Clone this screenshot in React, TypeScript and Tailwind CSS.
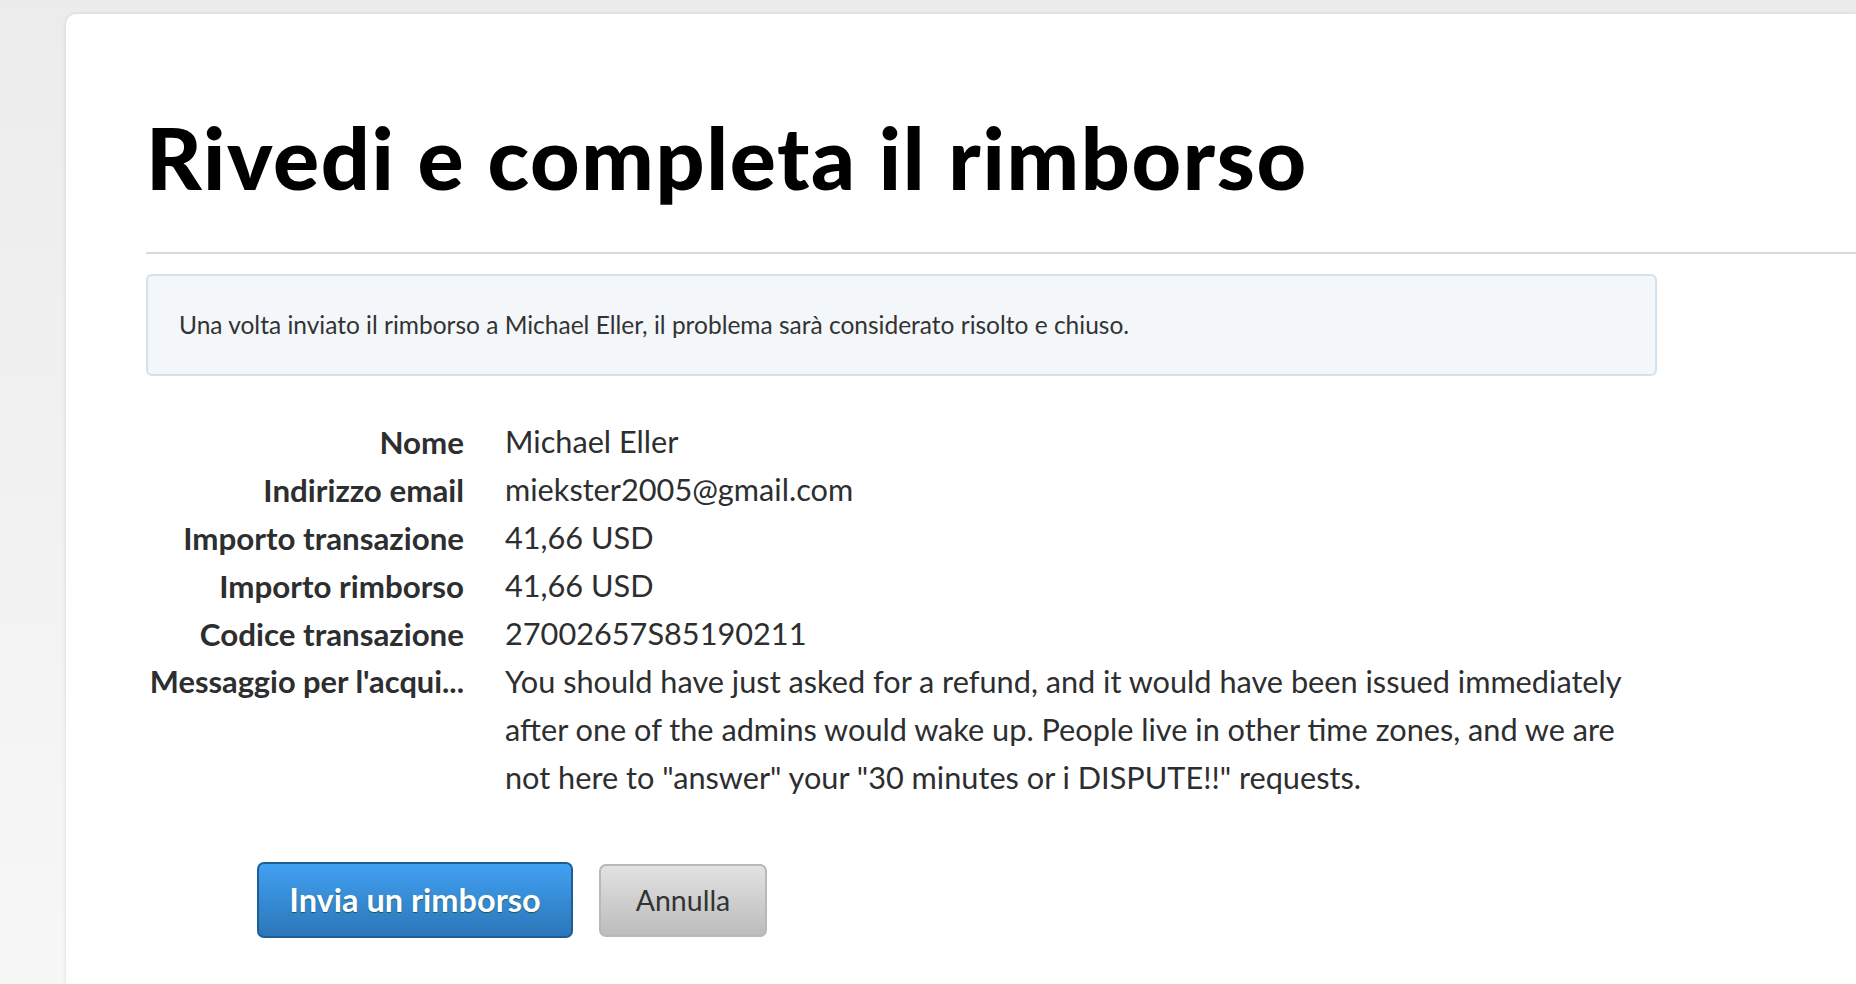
const rows = [
  { label: "Nome", value: "Michael Eller" },
  { label: "Indirizzo email", value: "miekster2005@gmail.com" },
  { label: "Importo transazione", value: "41,66 USD" },
  { label: "Importo rimborso", value: "41,66 USD" },
  { label: "Codice transazione", value: "27002657S85190211" },
];

export default function App() {
  return (
    <div className="min-h-[984px] bg-gradient-to-b from-[#ececec] to-[#f7f7f7] pt-[14px] pl-[66px] font-['Lato',sans-serif] overflow-hidden">
      <div className="bg-white min-h-[970px] rounded-tl-[10px] shadow-[0_0_4px_rgba(0,0,0,0.12)] pl-[80px] pt-[93px]">
        <h1 className="text-[86px] leading-[100px] font-black text-black tracking-[1.65px] whitespace-nowrap">
          Rivedi e completa il rimborso
        </h1>
        <div className="mt-[45px] h-[2px] bg-[#d9d9d9]" />
        <div className="mt-[20px] w-[1511px] h-[102px] flex items-center px-[31px] bg-[#f3f7fa] border-2 border-[#d3e1ec] rounded-[6px] text-[24.5px] text-[#333]">
          Una volta inviato il rimborso a Michael Eller, il problema sarà considerato risolto e chiuso.
        </div>
        <div className="mt-[42px] flex flex-col text-[30.7px] leading-[48px] text-[#2c2e2f]">
          {rows.map((r) => (
            <div key={r.label} className="flex">
              <div className="w-[318px] text-right font-bold text-[31.3px] whitespace-nowrap">{r.label}</div>
              <div className="ml-[41px]">{r.value}</div>
            </div>
          ))}
          <div className="flex">
            <div className="w-[318px] flex justify-end font-bold text-[30.8px] whitespace-nowrap">Messaggio per l'acqui...</div>
            <div className="ml-[41px] whitespace-nowrap">
              You should have just asked for a refund, and it would have been issued immediately
              <br />
              after one of the admins would wake up. People live in other time zones, and we are
              <br />
              not here to "answer" your "30 minutes or i DISPUTE!!" requests.
            </div>
          </div>
        </div>
        <div className="mt-[60px] ml-[111px] flex items-center gap-[26px]">
          <button className="w-[316px] h-[76px] rounded-[7px] border-2 border-[#1f5d95] bg-gradient-to-b from-[#42a1f2] to-[#2b76b9] text-white text-[32.5px] font-bold [text-shadow:0_1px_1px_rgba(0,60,0,0.6)]">
            Invia un rimborso
          </button>
          <button className="w-[168px] h-[73px] rounded-[7px] border-2 border-[#b8b8b8] bg-gradient-to-b from-[#e2e2e2] to-[#bcbcbc] text-[#333] text-[28.5px]">
            Annulla
          </button>
        </div>
      </div>
    </div>
  );
}
